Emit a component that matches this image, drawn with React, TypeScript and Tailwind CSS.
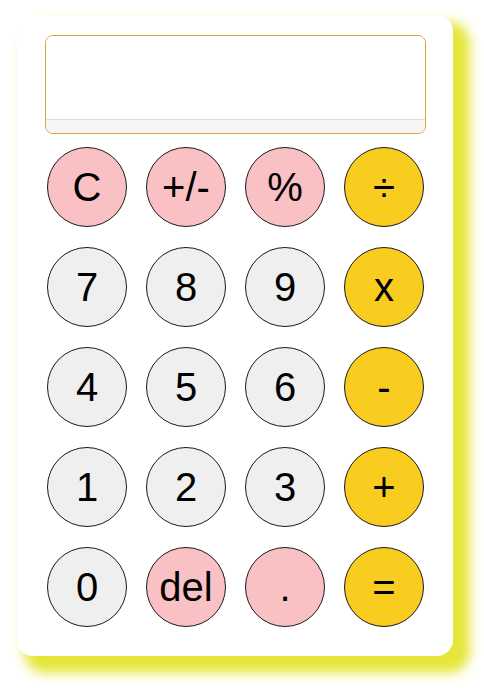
import React from "react";

type Key = { label: string; kind: "pink" | "gray" | "yellow" };

const rows: Key[][] = [
  [
    { label: "C", kind: "pink" },
    { label: "+/-", kind: "pink" },
    { label: "%", kind: "pink" },
    { label: "÷", kind: "yellow" },
  ],
  [
    { label: "7", kind: "gray" },
    { label: "8", kind: "gray" },
    { label: "9", kind: "gray" },
    { label: "x", kind: "yellow" },
  ],
  [
    { label: "4", kind: "gray" },
    { label: "5", kind: "gray" },
    { label: "6", kind: "gray" },
    { label: "-", kind: "yellow" },
  ],
  [
    { label: "1", kind: "gray" },
    { label: "2", kind: "gray" },
    { label: "3", kind: "gray" },
    { label: "+", kind: "yellow" },
  ],
  [
    { label: "0", kind: "gray" },
    { label: "del", kind: "pink" },
    { label: ".", kind: "pink" },
    { label: "=", kind: "yellow" },
  ],
];

function KeyButton({ k }: { k: Key }) {
  const bg =
    k.kind === "pink"
      ? "bg-[#f9c1c4]"
      : k.kind === "yellow"
      ? "bg-[#f9cc20]"
      : "bg-[#efefef]";
  return (
    <button
      className={`${bg} w-[80px] h-[80px] rounded-full border-[1.5px] border-[#1a1a1a] flex items-center justify-center text-[40px] leading-none text-black`}
      style={{ fontFamily: '"Liberation Sans", Arial, sans-serif' }}
    >
      {k.label}
    </button>
  );
}

export default function App() {
  return (
    <div className="w-[484px] h-[693px] bg-white pt-[15px] pl-[17px]">
      <div className="w-[436px] h-[641px] bg-white rounded-[16px] shadow-[12px_12px_12px_5px_#e6e63a] pt-[20px] pl-[28px] pr-[27px]">
        <div className="h-[99px] rounded-[8px] border border-[#e3a234] overflow-hidden flex flex-col">
          <div className="flex-1 bg-white" />
          <div className="h-[14px] bg-[#f6f6f6] border-t border-[#dddddd]" />
        </div>
        <div className="mt-[13px] flex flex-col gap-[20px] px-[2px]">
          {rows.map((r, i) => (
            <div key={i} className="flex gap-[19px]">
              {r.map((k) => (
                <KeyButton key={k.label} k={k} />
              ))}
            </div>
          ))}
        </div>
      </div>
    </div>
  );
}
